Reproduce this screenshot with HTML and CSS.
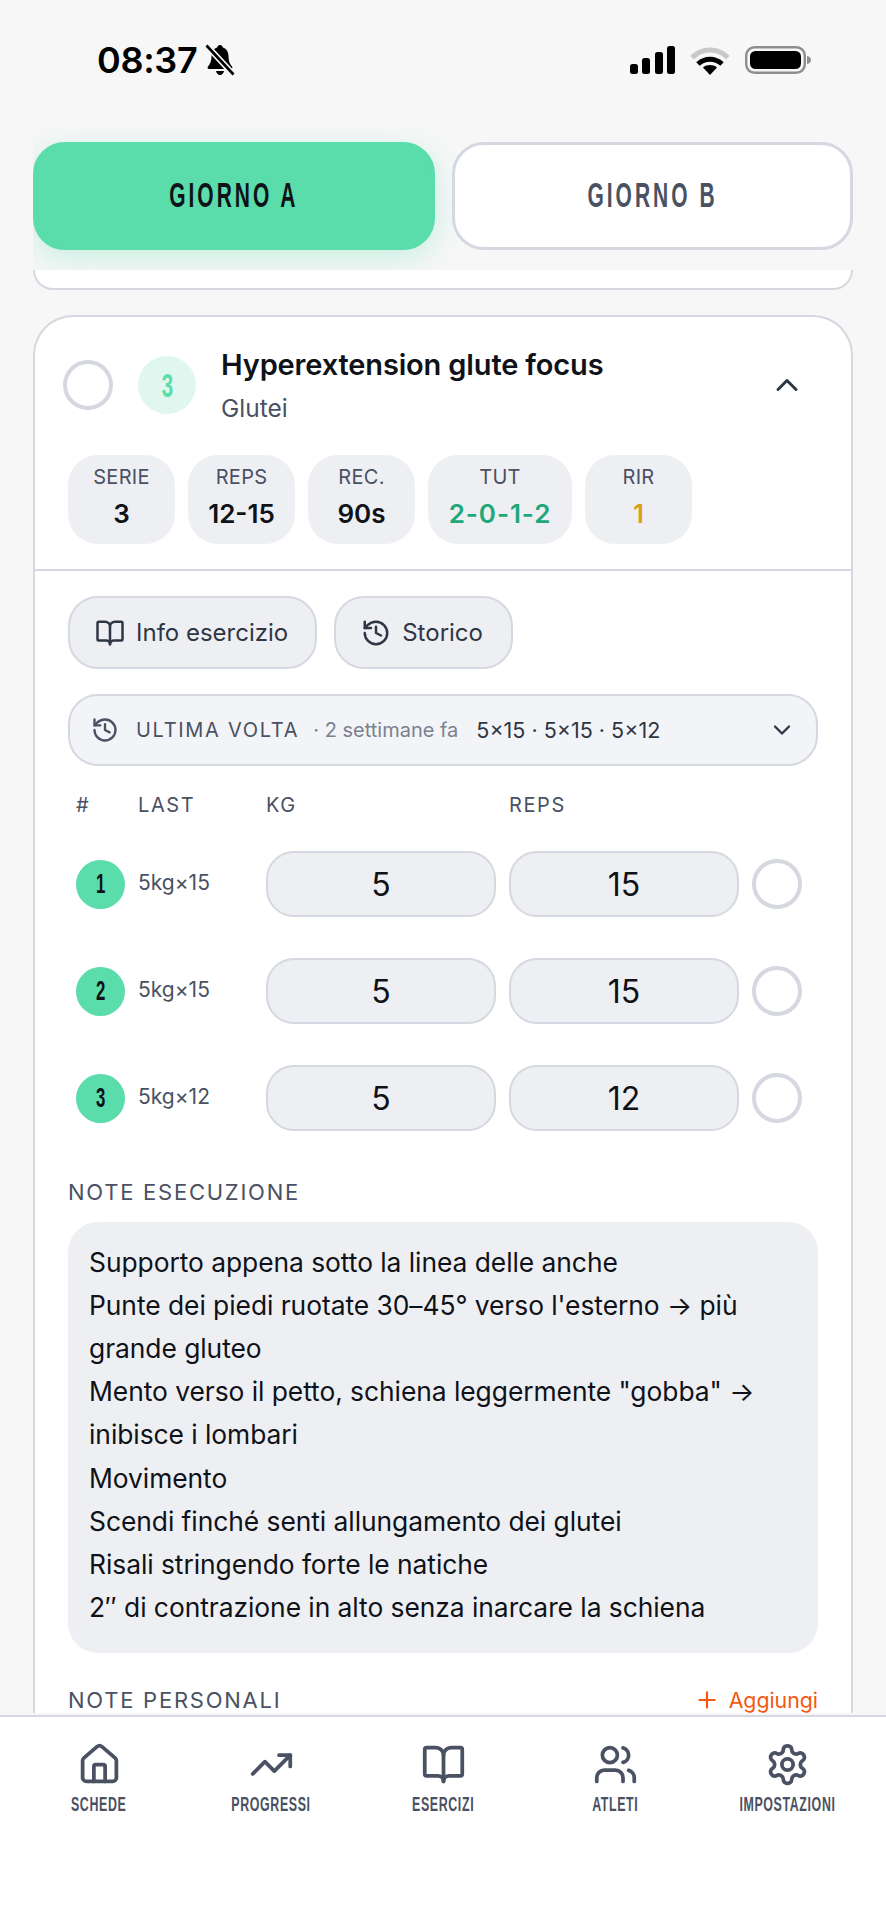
FILE: index.html
```html
<!DOCTYPE html>
<html lang="it">
<head>
<meta charset="utf-8">
<title>Giorno A</title>
<link rel="stylesheet" href="styles.css">
</head>
<body>
<div class="phone">
  <div class="status">
    <div class="status-left">
      <span class="time">08:37</span>
      <svg class="bell" viewBox="0 0 30 32"><path d="M15 1c-1.600 0-2.600 1-2.800 2.400C8.400 4.600 6.500 8 6.500 12c0 5-1.300 8-3.500 10.500-.9 1-.3 2.500 1.200 2.500h21.600c1.500 0 2.100-1.500 1.200-2.500-2.200-2.500-3.500-5.500-3.500-10.500 0-4-1.900-7.400-5.700-8.600C17.600 2 16.600 1 15 1zM11 27c.4 2.300 2 4 4 4s3.600-1.700 4-4z" fill="#000"/><path d="M2 2l26 28" stroke="#f7f7f7" stroke-width="6"/><path d="M1.500 1.500l27 29" stroke="#000" stroke-width="2.600"/></svg>
    </div>
    <div class="status-right">
      <svg class="signal" viewBox="0 0 45 28"><rect x="0" y="18" width="8" height="10" rx="2.500"/><rect x="12" y="12" width="8" height="16" rx="2.500"/><rect x="25" y="6" width="8" height="22" rx="2.500"/><rect x="37" y="0" width="8" height="28" rx="2.500"/></svg>
      <svg class="wifi" viewBox="0 0 40 29"><path d="M2 11.500C12.500 1.500 27.500 1.500 38 11.500" fill="none" stroke="#c8c8c8" stroke-width="5"/><path d="M8 18c7-6.500 17-6.500 24 0" fill="none" stroke="#000" stroke-width="5"/><path d="M20 29l-7-7.500c4-3.200 10-3.200 14 0z" fill="#000"/></svg>
      <svg class="battery" viewBox="0 0 66 28"><rect x="1.200" y="1.200" width="58.600" height="25.600" rx="8.500" fill="none" stroke="#8e8e8e" stroke-width="2.400"/><rect x="5" y="5" width="51" height="18" rx="5.500" fill="#000"/><path d="M62 10c2.500.5 4 2 4 4s-1.500 3.500-4 4z" fill="#8e8e8e"/></svg>
    </div>
  </div>

  <div class="tabs">
    <button class="tab tab-active"><span class="cond">GIORNO A</span></button>
    <button class="tab"><span class="cond">GIORNO B</span></button>
  </div>

  <div class="scroll">
    <div class="card-prev"></div>
    <section class="card">
      <header class="card-head">
        <div class="head-row">
          <span class="check"></span>
          <span class="num"><span class="cond">3</span></span>
          <div class="head-text">
            <h2 class="title">Hyperextension glute focus</h2>
            <p class="muscle">Glutei</p>
          </div>
          <svg class="chev-up" viewBox="0 0 24 24"><path d="m18 15-6-6-6 6"/></svg>
        </div>
        <div class="chips">
          <div class="chip"><span class="chip-label">SERIE</span><span class="chip-value">3</span></div>
          <div class="chip"><span class="chip-label">REPS</span><span class="chip-value">12-15</span></div>
          <div class="chip"><span class="chip-label">REC.</span><span class="chip-value">90s</span></div>
          <div class="chip chip-wide"><span class="chip-label">TUT</span><span class="chip-value val-green">2-0-1-2</span></div>
          <div class="chip"><span class="chip-label">RIR</span><span class="chip-value val-amber">1</span></div>
        </div>
      </header>

      <div class="card-body">
        <div class="actions">
          <button class="action">
            <svg class="ico" viewBox="0 0 24 24"><path d="M12 7v14"/><path d="M3 18a1 1 0 0 1-1-1V4a1 1 0 0 1 1-1h5a4 4 0 0 1 4 4 4 4 0 0 1 4-4h5a1 1 0 0 1 1 1v13a1 1 0 0 1-1 1h-6a3 3 0 0 0-3 3 3 3 0 0 0-3-3z"/></svg>
            Info esercizio
          </button>
          <button class="action">
            <svg class="ico" viewBox="0 0 24 24"><path d="M3 12a9 9 0 1 0 9-9 9.750 9.750 0 0 0-6.740 2.740L3 8"/><path d="M3 3v5h5"/><path d="M12 7v5l4 2"/></svg>
            Storico
          </button>
        </div>

        <div class="last">
          <svg class="ico ico-last" viewBox="0 0 24 24"><path d="M3 12a9 9 0 1 0 9-9 9.750 9.750 0 0 0-6.740 2.740L3 8"/><path d="M3 3v5h5"/><path d="M12 7v5l4 2"/></svg>
          <span class="last-label">ULTIMA VOLTA</span>
          <span class="last-when">· 2 settimane fa</span>
          <span class="last-values">5×15 · 5×15 · 5×12</span>
          <svg class="chev-down" viewBox="0 0 24 24"><path d="m6 9 6 6 6-6"/></svg>
        </div>

        <div class="sets">
          <span class="sets-h">#</span><span class="sets-h">LAST</span><span class="sets-h">KG</span><span class="sets-h">REPS</span><span></span>

          <span class="set-n"><span class="cond">1</span></span><span class="set-last">5kg×15</span><div class="field">5</div><div class="field">15</div><span class="check"></span>
          <span class="set-n"><span class="cond">2</span></span><span class="set-last">5kg×15</span><div class="field">5</div><div class="field">15</div><span class="check"></span>
          <span class="set-n"><span class="cond">3</span></span><span class="set-last">5kg×12</span><div class="field">5</div><div class="field">12</div><span class="check"></span>
        </div>

        <h3 class="section-label">NOTE ESECUZIONE</h3>
        <div class="notes">
          <p>Supporto appena sotto la linea delle anche</p>
          <p>Punte dei piedi ruotate 30–45° verso l'esterno → più grande gluteo</p>
          <p>Mento verso il petto, schiena leggermente "gobba" → inibisce i lombari</p>
          <p>Movimento</p>
          <p>Scendi finché senti allungamento dei glutei</p>
          <p>Risali stringendo forte le natiche</p>
          <p>2″ di contrazione in alto senza inarcare la schiena</p>
        </div>

        <div class="personal">
          <h3 class="section-label section-flat">NOTE PERSONALI</h3>
          <span class="add">
            <svg class="add-ico" viewBox="0 0 24 24"><path d="M5 12h14"/><path d="M12 5v14"/></svg>
            Aggiungi
          </span>
        </div>
      </div>
    </section>
  </div>

  <nav class="nav">
    <div class="nav-item">
      <svg class="nav-ico" viewBox="0 0 24 24"><path d="M15 21v-8a1 1 0 0 0-1-1h-4a1 1 0 0 0-1 1v8"/><path d="M3 10a2 2 0 0 1 .709-1.528l7-5.999a2 2 0 0 1 2.582 0l7 5.999A2 2 0 0 1 21 10v9a2 2 0 0 1-2 2H5a2 2 0 0 1-2-2z"/></svg>
      <span class="cond nav-label">SCHEDE</span>
    </div>
    <div class="nav-item">
      <svg class="nav-ico" viewBox="0 0 24 24"><path d="M22 7 13.500 15.500 8.500 10.500 2 17"/><path d="M16 7h6v6"/></svg>
      <span class="cond nav-label">PROGRESSI</span>
    </div>
    <div class="nav-item">
      <svg class="nav-ico" viewBox="0 0 24 24"><path d="M12 7v14"/><path d="M3 18a1 1 0 0 1-1-1V4a1 1 0 0 1 1-1h5a4 4 0 0 1 4 4 4 4 0 0 1 4-4h5a1 1 0 0 1 1 1v13a1 1 0 0 1-1 1h-6a3 3 0 0 0-3 3 3 3 0 0 0-3-3z"/></svg>
      <span class="cond nav-label">ESERCIZI</span>
    </div>
    <div class="nav-item">
      <svg class="nav-ico" viewBox="0 0 24 24"><path d="M16 21v-2a4 4 0 0 0-4-4H6a4 4 0 0 0-4 4v2"/><circle cx="9" cy="7" r="4"/><path d="M22 21v-2a4 4 0 0 0-3-3.870"/><path d="M16 3.130a4 4 0 0 1 0 7.750"/></svg>
      <span class="cond nav-label">ATLETI</span>
    </div>
    <div class="nav-item">
      <svg class="nav-ico" viewBox="0 0 24 24"><path d="M12.220 2h-.44a2 2 0 0 0-2 2v.18a2 2 0 0 1-1 1.730l-.43.25a2 2 0 0 1-2 0l-.15-.08a2 2 0 0 0-2.730.73l-.22.38a2 2 0 0 0 .73 2.730l.15.1a2 2 0 0 1 1 1.720v.51a2 2 0 0 1-1 1.740l-.15.09a2 2 0 0 0-.73 2.730l.22.38a2 2 0 0 0 2.730.73l.15-.08a2 2 0 0 1 2 0l.43.25a2 2 0 0 1 1 1.730V20a2 2 0 0 0 2 2h.44a2 2 0 0 0 2-2v-.18a2 2 0 0 1 1-1.730l.43-.25a2 2 0 0 1 2 0l.15.08a2 2 0 0 0 2.730-.73l.22-.39a2 2 0 0 0-.73-2.730l-.15-.08a2 2 0 0 1-1-1.740v-.5a2 2 0 0 1 1-1.740l.15-.09a2 2 0 0 0 .73-2.730l-.22-.38a2 2 0 0 0-2.730-.73l-.15.08a2 2 0 0 1-2 0l-.43-.25a2 2 0 0 1-1-1.730V4a2 2 0 0 0-2-2z"/><circle cx="12" cy="12" r="3"/></svg>
      <span class="cond nav-label">IMPOSTAZIONI</span>
    </div>
  </nav>
</div>
</body>
</html>
```

FILE: styles.css
```css
* { box-sizing: border-box; }
html, body { margin: 0; padding: 0; }
body { font-family: Inter, "Noto Sans", sans-serif; color: #0f1218; background: #f7f7f7; }
p, h2, h3 { margin: 0; font-weight: inherit; }
button { font-family: inherit; }

.cond { display: inline-block; white-space: nowrap; font-family: "Liberation Sans", Arial, sans-serif; font-weight: 700; transform: scaleX(.6); }

.phone { width: 886px; height: 1920px; display: flex; flex-direction: column; overflow: hidden; background: #f7f7f7; }

.status { height: 122px; flex: none; display: flex; justify-content: space-between; align-items: flex-start; padding: 44px 75px 0 97px; }
.status-left { display: flex; align-items: center; gap: 8px; height: 32px; }
.time { font-size: 36px; font-weight: 600; line-height: 32px; letter-spacing: -0.3px; color: #000; }
.bell { width: 30px; height: 32px; }
.status-right { display: flex; align-items: flex-start; padding-top: 2px; }
.signal { width: 45px; height: 28px; fill: #000; margin-right: 15px; }
.wifi { width: 40px; height: 29px; margin-right: 15px; }
.battery { width: 66px; height: 28px; }

.tabs { flex: none; display: flex; gap: 17px; margin: 0 33px; padding: 20px 0; overflow: hidden; }
.tab { flex: 1 1 0; height: 108px; padding: 0 0 4px; border-radius: 32px; border: 3px solid #d5d8e0; background: #fff; color: #4a5162; font-size: 35px; letter-spacing: 5px; }
.tab-active { background: #5adcab; border-color: #5adcab; color: #0f1218; box-shadow: 0 8px 30px rgba(90, 220, 171, .3); }

.scroll { flex: 1 1 0; min-height: 0; overflow: hidden; padding: 0 33px; }
.card-prev { height: 20px; background: #fff; border: 2px solid #d5d8e0; border-top: 0; border-radius: 0 0 32px 32px; margin-bottom: 25px; }
.card { background: #fff; border: 2px solid #d5d8e0; border-bottom: 0; border-radius: 40px 40px 0 0; }

.card-head { padding: 30px 33px 25px 28px; border-bottom: 2px solid #d5d8e0; }
.head-row { display: flex; align-items: center; gap: 25px; }
.check { display: block; flex: none; width: 50px; height: 50px; border-radius: 50%; border: 4px solid #d5d8e0; background: #fff; }
.num { flex: none; width: 58px; height: 58px; border-radius: 50%; background: #dff7ee; color: #5adcab; display: flex; align-items: center; justify-content: center; font-size: 34px; }
.head-text { flex: 1; }
.title { font-size: 29px; font-weight: 600; line-height: 36px; letter-spacing: -0.150px; color: #0f1218; }
.muscle { font-size: 24.500px; line-height: 30px; margin-top: 10px; color: #4a5162; }
.chev-up, .chev-down { fill: none; stroke: #2f3644; stroke-width: 2; stroke-linecap: round; stroke-linejoin: round; }
.chev-up { flex: none; width: 36px; height: 36px; margin-right: 13px; }

.chips { display: flex; gap: 13px; margin: 32px 0 0 5px; }
.chip { min-width: 107px; height: 89px; border-radius: 30px; background: #eeeff3; padding: 0 20px; display: flex; flex-direction: column; align-items: center; }
.chip-wide { min-width: 144px; }
.chip-label { font-size: 20px; line-height: 24px; margin-top: 10px; color: #4a5162; letter-spacing: .3px; }
.chip-value { font-size: 26px; line-height: 32px; margin-top: 9px; font-weight: 600; color: #0f1218; }
.val-green { color: #1fa87a; letter-spacing: .9px; }
.val-amber { color: #d9a017; }

.card-body { padding: 25px 33px 0; }
.actions { display: flex; gap: 17px; }
.action { height: 73px; border: 2px solid #d5d8e0; border-radius: 30px; background: #eeeff3; color: #2f3644; padding: 0 27px 0 25px; display: flex; align-items: center; gap: 11px; font-size: 24px; }
.action:last-child { padding-right: 28px; }
.ico { flex: none; width: 30px; height: 30px; fill: none; stroke: #2f3644; stroke-width: 2; stroke-linecap: round; stroke-linejoin: round; }

.last { height: 72px; margin-top: 25px; border: 2px solid #d5d8e0; border-radius: 30px; background: #f3f4f7; display: flex; align-items: center; padding: 0 20px 0 21px; }
.ico-last { stroke: #4a5162; width: 28px; height: 28px; }
.last-label { font-size: 20px; letter-spacing: 1.700px; color: #4a5162; margin-left: 17px; }
.last-when { font-size: 20px; color: #7a8190; margin-left: 14px; }
.last-values { font-size: 21.500px; color: #2f3644; margin-left: 18px; flex: 1; }
.chev-down { width: 28px; height: 28px; }

.sets { display: grid; grid-template-columns: 49px 115px 230px 230px 50px; column-gap: 13px; row-gap: 41px; align-items: center; padding-left: 8px; margin-top: 27px; }
.sets-h { font-size: 20px; line-height: 24px; letter-spacing: 1.600px; color: #4a5162; margin-bottom: -7px; }
.set-n { width: 49px; height: 49px; border-radius: 50%; background: #5adcab; color: #0f1218; display: flex; align-items: center; justify-content: center; font-size: 28px; }
.set-last { font-size: 21px; color: #4a5162; padding-bottom: 3px; }
.field { height: 66px; border: 2px solid #d5d8e0; border-radius: 28px; background: #eeeff3; display: flex; align-items: center; justify-content: center; font-size: 32px; color: #0f1218; }

.section-label { font-size: 22px; line-height: 26px; letter-spacing: 1.750px; color: #4a5162; margin: 48px 0 17px; }
.section-flat { margin: 0; }
.notes { border-radius: 30px; background: #eeeff3; padding: 18.500px 21px 23.500px; font-size: 26.400px; line-height: 43.200px; color: #0f1218; letter-spacing: -0.050px; }

.personal { display: flex; justify-content: space-between; align-items: center; margin-top: 34px; }
.add { display: flex; align-items: center; gap: 9px; font-size: 21.300px; color: #f4590f; }
.add-ico { width: 26px; height: 26px; fill: none; stroke: #f4590f; stroke-width: 2; stroke-linecap: round; }

.nav { flex: none; height: 205px; background: #fff; border-top: 2px solid #d5d8e0; display: grid; grid-template-columns: repeat(5, 172px); padding: 25px 13px 0; }
.nav-item { display: flex; flex-direction: column; align-items: center; gap: 5px; }
.nav-ico { width: 45px; height: 45px; fill: none; stroke: #4a5162; stroke-width: 2; stroke-linecap: round; stroke-linejoin: round; }
.nav-label { font-size: 20px; line-height: 24px; letter-spacing: 1px; color: #4a5162; transform: scaleX(.62); }
```
